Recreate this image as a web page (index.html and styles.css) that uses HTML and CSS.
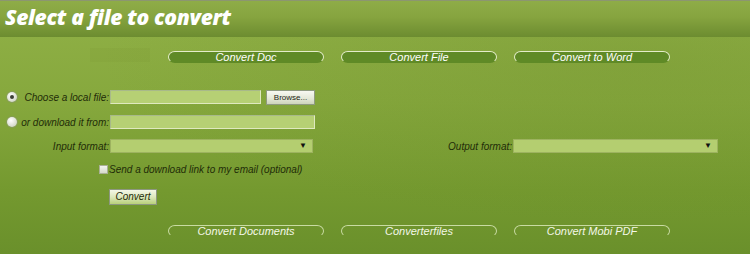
FILE: index.html
```html
<!DOCTYPE html>
<html>
<head>
<meta charset="utf-8">
<link rel="stylesheet" href="styles.css">
</head>
<body>
<div class="page">
  <header class="header">
    <h1 class="title">Select a file to convert</h1>
  </header>
  <main class="content">
    <nav class="tabs tabs-top">
      <span class="ghost"></span>
      <a class="tab">Convert Doc</a>
      <a class="tab">Convert File</a>
      <a class="tab">Convert to Word</a>
    </nav>
    <form class="form">
      <div class="row">
        <div class="lead"><span class="radio checked"></span><span class="label">Choose a local file:</span></div>
        <span class="input input-short"></span>
        <span class="browse">Browse...</span>
      </div>
      <div class="row row-2">
        <div class="lead"><span class="radio"></span><span class="label">or download it from:</span></div>
        <span class="input input-long"></span>
      </div>
      <div class="row row-3">
        <div class="lead"><span class="label">Input format:</span></div>
        <span class="select select-in"><span class="arrow">▼</span></span>
        <span class="label out-label">Output format:</span>
        <span class="select select-out"><span class="arrow">▼</span></span>
      </div>
      <div class="row row-check">
        <span class="checkbox"></span>
        <span class="label">Send a download link to my email (optional)</span>
      </div>
      <div class="row row-btn">
        <span class="convert">Convert</span>
      </div>
    </form>
    <nav class="tabs tabs-bottom">
      <a class="tab">Convert Documents</a>
      <a class="tab">Converterfiles</a>
      <a class="tab">Convert Mobi PDF</a>
    </nav>
  </main>
</div>
</body>
</html>
```

FILE: styles.css
```css
html, body {
  margin: 0;
  padding: 0;
}
body {
  width: 750px;
  height: 254px;
  overflow: hidden;
  font-family: "Liberation Sans", Arial, sans-serif;
}
.page {
  width: 750px;
  height: 254px;
  display: flex;
  flex-direction: column;
  background: linear-gradient(180deg, #91b147 0%, #86a83d 40%, #74992f 75%, #6a902b 100%);
}
.header {
  height: 37px;
  box-sizing: border-box;
  border-top: 1px solid #8c9670;
  background: linear-gradient(180deg, #8eac47 0%, #86a43f 45%, #6c8c30 100%);
  display: flex;
  align-items: center;
  padding-left: 5px;
}
.title {
  margin: 0;
  color: #ffffff;
  font-family: "Open Sans", sans-serif;
  font-weight: 800;
  font-style: italic;
  font-size: 21px;
  letter-spacing: -0.3px;
  line-height: 1;
  position: relative;
  top: -2px;
}
.content {
  flex: 1;
  display: flex;
  flex-direction: column;
  background: radial-gradient(ellipse at 85% 10%, rgba(90, 120, 30, 0.18), rgba(90, 120, 30, 0) 60%);
}
.tabs {
  display: flex;
  gap: 17px;
  padding-left: 168px;
}
.tabs-top {
  margin-top: 14px;
  position: relative;
}
.ghost {
  position: absolute;
  left: 90px;
  top: -3px;
  width: 60px;
  height: 14px;
  background: rgba(120, 150, 50, 0.15);
}
.tab {
  width: 156px;
  height: 12px;
  box-sizing: border-box;
  border: 1px solid #e3ecc9;
  border-bottom-color: transparent;
  border-radius: 8px / 7px;
  color: #ffffff;
  font-style: italic;
  font-size: 11px;
  line-height: 11px;
  text-align: center;
}
.tabs-top .tab {
  background: #5f8a26;
}
.tabs-bottom {
  margin-top: 20px;
}
.tabs-bottom .tab {
  border-color: #c9dba3;
  border-bottom-color: transparent;
  color: #f3f7e8;
}
.form {
  margin: 27px 0 0 0;
  display: flex;
  flex-direction: column;
}
.row {
  display: flex;
  align-items: center;
  height: 14px;
}
.row-2 { margin-top: 11px; }
.row-3 { margin-top: 10px; }
.row-check { margin-top: 9px; padding-left: 99px; }
.row-btn { margin-top: 13px; padding-left: 109px; height: 16px; }
.lead {
  width: 109px;
  box-sizing: border-box;
  padding-left: 7px;
  display: flex;
  align-items: center;
}
.lead .label {
  margin-left: auto;
}
.label {
  font-size: 10px;
  font-style: italic;
  color: #1f2c08;
  white-space: nowrap;
}
.radio {
  width: 10px;
  height: 10px;
  border-radius: 50%;
  background: radial-gradient(circle at 40% 35%, #ffffff, #d5d9cc 70%, #b9bfae);
  box-shadow: 0 0 0 1px rgba(140, 150, 120, 0.5);
  display: flex;
  align-items: center;
  justify-content: center;
}
.radio.checked::after {
  content: "";
  width: 4px;
  height: 4px;
  border-radius: 50%;
  background: #3b3f36;
}
.input {
  height: 14px;
  box-sizing: border-box;
  margin-left: 1px;
  background: #b6d074;
  border: 1px solid #dfe9bf;
  border-top-color: #a8b98a;
  border-left-color: #a8b98a;
}
.input-short { width: 151px; }
.input-long { width: 205px; }
.browse {
  margin-left: 5px;
  width: 49px;
  height: 15px;
  box-sizing: border-box;
  border: 1px solid #8f9a80;
  background: linear-gradient(180deg, #f7f8f2 0%, #e3e7d6 60%, #cdd4bb 100%);
  font-size: 8px;
  line-height: 13px;
  text-align: center;
  color: #1e2414;
}
.select {
  height: 14px;
  box-sizing: border-box;
  margin-left: 1px;
  background: #b4ce70;
  border: 1px solid #9db35f;
  display: flex;
  align-items: center;
  justify-content: flex-end;
  padding-right: 5px;
}
.select-in { width: 203px; }
.select-out { width: 205px; }
.arrow {
  font-size: 8px;
  color: #111;
  line-height: 1;
}
.out-label {
  width: 199px;
  text-align: right;
}
.checkbox {
  width: 9px;
  height: 9px;
  box-sizing: border-box;
  background: linear-gradient(180deg, #f2f3ee, #d6dacb);
  border: 1px solid #aab097;
  margin-right: 1px;
}
.convert {
  width: 48px;
  height: 16px;
  box-sizing: border-box;
  border: 1px solid #8d9780;
  background: linear-gradient(180deg, #f4f7e8 0%, #dde8bd 50%, #b9d07a 100%);
  font-size: 10px;
  font-style: italic;
  line-height: 14px;
  text-align: center;
  color: #1e2a0a;
}
```
